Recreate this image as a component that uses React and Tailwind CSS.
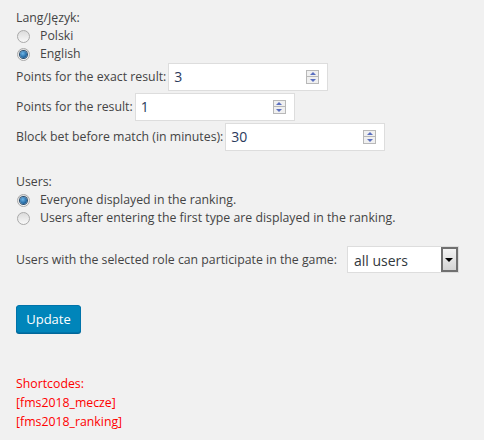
import React from 'react';

function Radio({ checked }) {
  return (
    <span className="inline-flex h-[13px] w-[13px] shrink-0 items-center justify-center rounded-full border border-[#a9a9a9] bg-gradient-to-b from-[#dcdcdc] to-[#f8f8f8]">
      {checked && (
        <span className="h-[7px] w-[7px] rounded-full bg-[radial-gradient(circle_at_40%_35%,#6fb6e8,#1a5f9a_70%,#0e3e6a)] ring-1 ring-[#2a4d6e]" />
      )}
    </span>
  );
}

function Spinner() {
  return (
    <span className="flex w-[13px] flex-col border border-[#b8b8b8] bg-[#f0f0f0]">
      <span className="flex h-[6px] items-center justify-center border-b border-[#b8b8b8]">
        <span className="h-0 w-0 border-x-[3px] border-b-[3px] border-x-transparent border-b-[#5a6fc0]" />
      </span>
      <span className="flex h-[6px] items-center justify-center">
        <span className="h-0 w-0 border-x-[3px] border-t-[3px] border-x-transparent border-t-[#5a6fc0]" />
      </span>
    </span>
  );
}

function NumberField({ value }) {
  return (
    <span className="ml-[2px] flex h-[28px] w-[160px] items-center justify-between border border-[#dddddd] bg-white pl-[5px] pr-[8px] text-[14px] text-[#2b3a5c]">
      <span>{value}</span>
      <Spinner />
    </span>
  );
}

export default function App() {
  return (
    <div className="min-h-[440px] bg-[#f1f1f1] px-4 pt-[9px] text-[12.3px] leading-[18px] text-[#444] [font-family:'Open_Sans',sans-serif]">
      {/* Language */}
      <div>Lang/Język:</div>
      <label className="flex items-center gap-[10px] pl-[1px]">
        <Radio />
        <span>Polski</span>
      </label>
      <label className="flex items-center gap-[10px] pl-[1px]">
        <Radio checked />
        <span>English</span>
      </label>

      {/* Points */}
      <div className="flex items-center">
        <span>Points for the exact result:</span>
        <NumberField value="3" />
      </div>
      <div className="mt-[2px] flex items-center">
        <span>Points for the result:</span>
        <NumberField value="1" />
      </div>
      <div className="mt-[2px] flex items-center">
        <span>Block bet before match (in minutes):</span>
        <NumberField value="30" />
      </div>

      {/* Users */}
      <div className="mt-[22px]">Users:</div>
      <label className="flex items-center gap-[10px] pl-[1px]">
        <Radio checked />
        <span>Everyone displayed in the ranking.</span>
      </label>
      <label className="flex items-center gap-[10px] pl-[1px]">
        <Radio />
        <span>Users after entering the first type are displayed in the ranking.</span>
      </label>

      {/* Role */}
      <div className="mt-[19px] flex h-[27px] items-center">
        <span>Users with the selected role can participate in the game:</span>
        <span className="ml-[10px] flex h-[27px] w-[112px] items-stretch border border-[#dddddd] bg-white text-[14px] text-[#32373c]">
          <span className="flex flex-1 items-center pl-[6px] pt-[2px]">all users</span>
          <span className="flex w-[17px] items-center justify-center border-2 border-[#707070] bg-gradient-to-b from-[#f4f4f4] to-[#d4d4d4]">
            <span className="h-0 w-0 border-x-[4px] border-t-[4px] border-x-transparent border-t-black" />
          </span>
        </span>
      </div>

      {/* Submit */}
      <button className="mt-[32px] block h-[28px] w-[65px] rounded-[3px] border border-[#0073aa] bg-[#0085ba] text-[13px] text-white shadow-[0_1px_0_#006799]">
        Update
      </button>

      {/* Shortcodes */}
      <div className="mt-[41px] leading-[19px] text-[#ff0000]">
        <div>Shortcodes:</div>
        <div>[fms2018_mecze]</div>
        <div>[fms2018_ranking]</div>
      </div>
    </div>
  );
}
